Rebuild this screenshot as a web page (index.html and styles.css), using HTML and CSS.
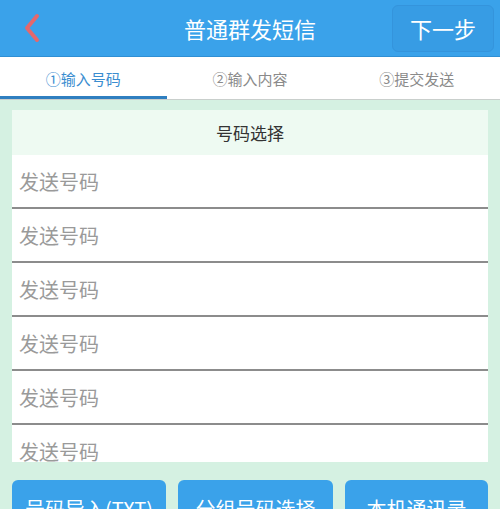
FILE: index.html
```html
<!DOCTYPE html>
<html lang="zh-CN">
<head>
  <meta charset="UTF-8" />
  <title>普通群发短信</title>
  <link rel="stylesheet" href="styles.css">
</head>
<body>

  <!-- 顶部导航 -->
  <header class="topbar">
    <a class="back" href="#">
      <svg width="20" height="30" viewBox="0 0 20 30">
        <path d="M15 3 L5 15 L15 27" fill="none" stroke="#e4686d" stroke-width="4" stroke-linecap="round" stroke-linejoin="round"/>
      </svg>
    </a>
    <h1 class="title">普通群发短信</h1>
    <button class="btn-next">下一步</button>
  </header>

  <!-- 步骤 -->
  <nav class="steps">
    <div class="step active">①输入号码</div>
    <div class="step">②输入内容</div>
    <div class="step">③提交发送</div>
  </nav>

  <main class="content">
    <div class="card">
      <div class="card-head">号码选择</div>
      <div class="list">
        <input class="row" type="text" placeholder="发送号码" />
        <input class="row" type="text" placeholder="发送号码" />
        <input class="row" type="text" placeholder="发送号码" />
        <input class="row" type="text" placeholder="发送号码" />
        <input class="row" type="text" placeholder="发送号码" />
        <input class="row" type="text" placeholder="发送号码" />
      </div>
    </div>

    <div class="actions">
      <button class="btn-action">号码导入(TXT)</button>
      <button class="btn-action">分组号码选择</button>
      <button class="btn-action">本机通讯录</button>
    </div>
  </main>

</body>
</html>
```

FILE: styles.css
```css
body {
  margin: 0;
  font-family: "Noto Sans CJK SC", "Noto Sans", sans-serif;
  background: #d5f1e2;
  height: 509px;
  overflow: hidden;
}

.topbar {
  height: 56px;
  background: #3aa2ea;
  display: flex;
  align-items: center;
  position: relative;
  border-bottom: 1px solid #2f8fd4;
}
.back {
  display: flex;
  margin-left: 22px;
}
.title {
  position: absolute;
  left: 0;
  right: 0;
  margin: 0;
  text-align: center;
  color: white;
  font-size: 22px;
  font-weight: normal;
  pointer-events: none;
}
.btn-next {
  margin-left: auto;
  margin-right: 6px;
  width: 102px;
  height: 47px;
  border: 1px solid #3494dc;
  border-radius: 6px;
  background: #379ce4;
  color: white;
  font-family: inherit;
  font-size: 22px;
  cursor: pointer;
}

.steps {
  display: flex;
  background: white;
  height: 42px;
  border-bottom: 1px solid #c9cfcc;
}
.step {
  flex: 1;
  display: flex;
  align-items: center;
  justify-content: center;
  font-size: 15px;
  color: #8a8a8a;
}
.step.active {
  color: #3a8dd0;
  box-shadow: inset 0 -3px 0 #2f7fc0;
}

.content {
  padding: 10px 12px 0;
}
.card-head {
  height: 45px;
  background: #eefaf2;
  display: flex;
  align-items: center;
  justify-content: center;
  font-size: 17px;
  color: #333;
}
.list {
  height: 307px;
  overflow: hidden;
  background: white;
}
.row {
  display: block;
  width: 100%;
  box-sizing: border-box;
  height: 54px;
  border: none;
  border-bottom: 2px solid #8c8c8c;
  padding: 0 7px;
  font-family: inherit;
  font-size: 20px;
  outline: none;
}
.row::placeholder {
  color: #9a9a9a;
}

.actions {
  display: grid;
  grid-template-columns: 154px 155px 1fr;
  gap: 12px;
  margin-top: 18px;
}
.btn-action {
  height: 56px;
  border: none;
  border-radius: 6px;
  background: #3aa2ea;
  color: white;
  font-family: inherit;
  font-size: 20px;
  padding: 0;
  white-space: nowrap;
  cursor: pointer;
}
```
